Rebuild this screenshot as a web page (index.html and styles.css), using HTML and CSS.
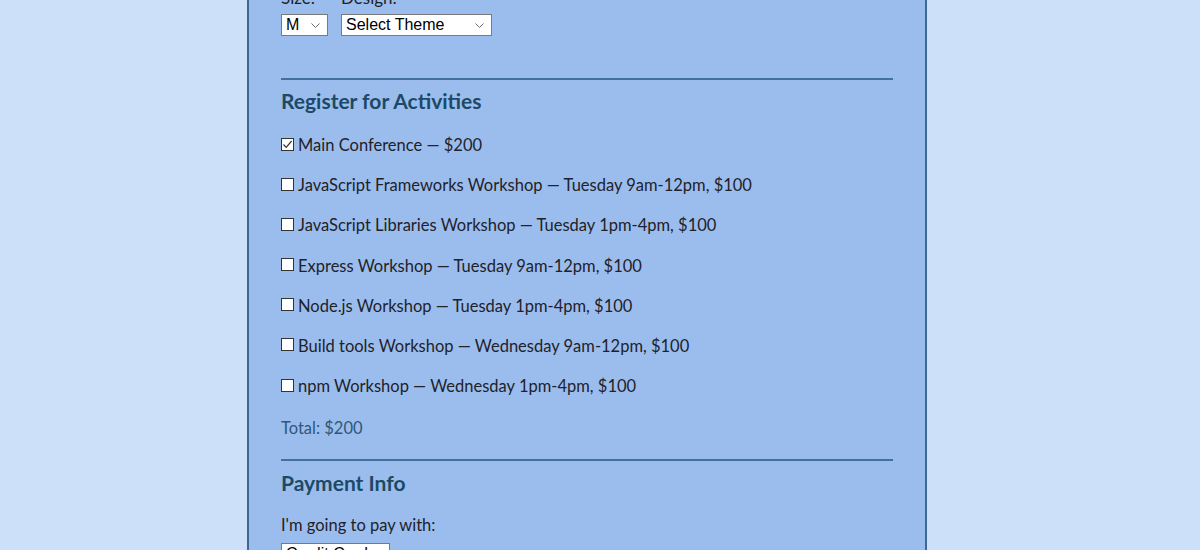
FILE: index.html
```html
<!DOCTYPE html>
<html lang="en">
<head>
<meta charset="utf-8">
<title>Register</title>
<link rel="stylesheet" href="styles.css">
</head>
<body>
<form class="page">
  <div class="shirt">
    <div class="field">
      <label class="lbl">Size:</label>
      <span class="select sel-size"><span class="sel-text">M</span><svg class="chev" width="9" height="5" viewBox="0 0 9 5"><path d="M0.5 0.5 L4.5 4.5 L8.5 0.5" fill="none" stroke="#6b6b6b" stroke-width="1"/></svg></span>
    </div>
    <div class="field">
      <label class="lbl">Design:</label>
      <span class="select sel-theme"><span class="sel-text">Select Theme</span><svg class="chev" width="9" height="5" viewBox="0 0 9 5"><path d="M0.5 0.5 L4.5 4.5 L8.5 0.5" fill="none" stroke="#6b6b6b" stroke-width="1"/></svg></span>
    </div>
  </div>
  <hr class="rule rule-a">
  <h3 class="heading heading-a">Register for Activities</h3>
  <div class="activities">
    <label class="act"><span class="box checked"><svg width="11" height="11" viewBox="0 0 11 11"><path d="M1.5 5.5 L4.2 8.3 L9.6 2" fill="none" stroke="#333" stroke-width="1.2"/></svg></span>Main Conference — $200</label>
    <label class="act"><span class="box"></span>JavaScript Frameworks Workshop — Tuesday 9am-12pm, $100</label>
    <label class="act"><span class="box"></span>JavaScript Libraries Workshop — Tuesday 1pm-4pm, $100</label>
    <label class="act"><span class="box"></span>Express Workshop — Tuesday 9am-12pm, $100</label>
    <label class="act"><span class="box"></span>Node.js Workshop — Tuesday 1pm-4pm, $100</label>
    <label class="act"><span class="box"></span>Build tools Workshop — Wednesday 9am-12pm, $100</label>
    <label class="act"><span class="box"></span>npm Workshop — Wednesday 1pm-4pm, $100</label>
  </div>
  <p class="total">Total: $200</p>
  <hr class="rule rule-b">
  <h3 class="heading heading-b">Payment Info</h3>
  <p class="paylbl">I'm going to pay with:</p>
  <span class="select sel-pay"><span class="sel-text">Credit Card</span></span>
</form>
</body>
</html>
```

FILE: styles.css
```css
html, body {
  margin: 0;
  padding: 0;
  height: 100%;
  overflow: hidden;
}
body {
  background: #cce0fa;
  font-family: "Lato", "Open Sans", sans-serif;
  color: #1f2229;
}
.page {
  margin: -12px 0 0 247px;
  width: 612px;
  padding: 0 32px 40px;
  background: #9bbdee;
  border-left: 2px solid #3d6894;
  border-right: 2px solid #3d6894;
  min-height: 700px;
}
.shirt {
  display: flex;
  gap: 13px;
}
.field {
  display: flex;
  flex-direction: column;
}
.lbl {
  font-size: 17px;
  line-height: 20px;
  height: 20px;
  margin-bottom: 6px;
}
.select {
  display: inline-flex;
  align-items: center;
  justify-content: space-between;
  box-sizing: border-box;
  height: 22px;
  background: #fff;
  border: 1px solid #7a7a7a;
  font-family: "Liberation Sans", Arial, sans-serif;
  font-size: 16px;
  color: #000;
  padding: 0 7px 0 4px;
}
.sel-text { line-height: 20px; }
.sel-size { width: 47px; }
.sel-theme { width: 151px; }
.sel-pay { width: 109px; margin-top: 8px; }
.chev { display: block; margin-top: 1px; }
.rule {
  border: 0;
  height: 2px;
  background: #44709c;
  margin: 0;
}
.rule-a { margin-top: 42px; }
.rule-b { margin-top: 21px; }
.heading {
  margin: 7px 0 0;
  font-size: 21px;
  line-height: 28px;
  font-weight: 700;
  color: #1c4a66;
}
.heading-b { margin-top: 8px; }
.activities {
  display: flex;
  flex-direction: column;
  gap: 20.2px;
  margin-top: 20px;
}
.act {
  display: flex;
  align-items: center;
  font-size: 16.5px;
  line-height: 20px;
  height: 20px;
}
.box {
  box-sizing: border-box;
  width: 13px;
  height: 13px;
  background: #fff;
  border: 1px solid #333;
  margin: 0 4px 2px 0;
  display: flex;
  align-items: center;
  justify-content: center;
}
.box svg { display: block; }
.total {
  margin: 22px 0 0;
  font-size: 16.5px;
  line-height: 20px;
  color: #2e5878;
}
.paylbl {
  margin: 18px 0 0;
  font-size: 16.5px;
  line-height: 20px;
}
```
